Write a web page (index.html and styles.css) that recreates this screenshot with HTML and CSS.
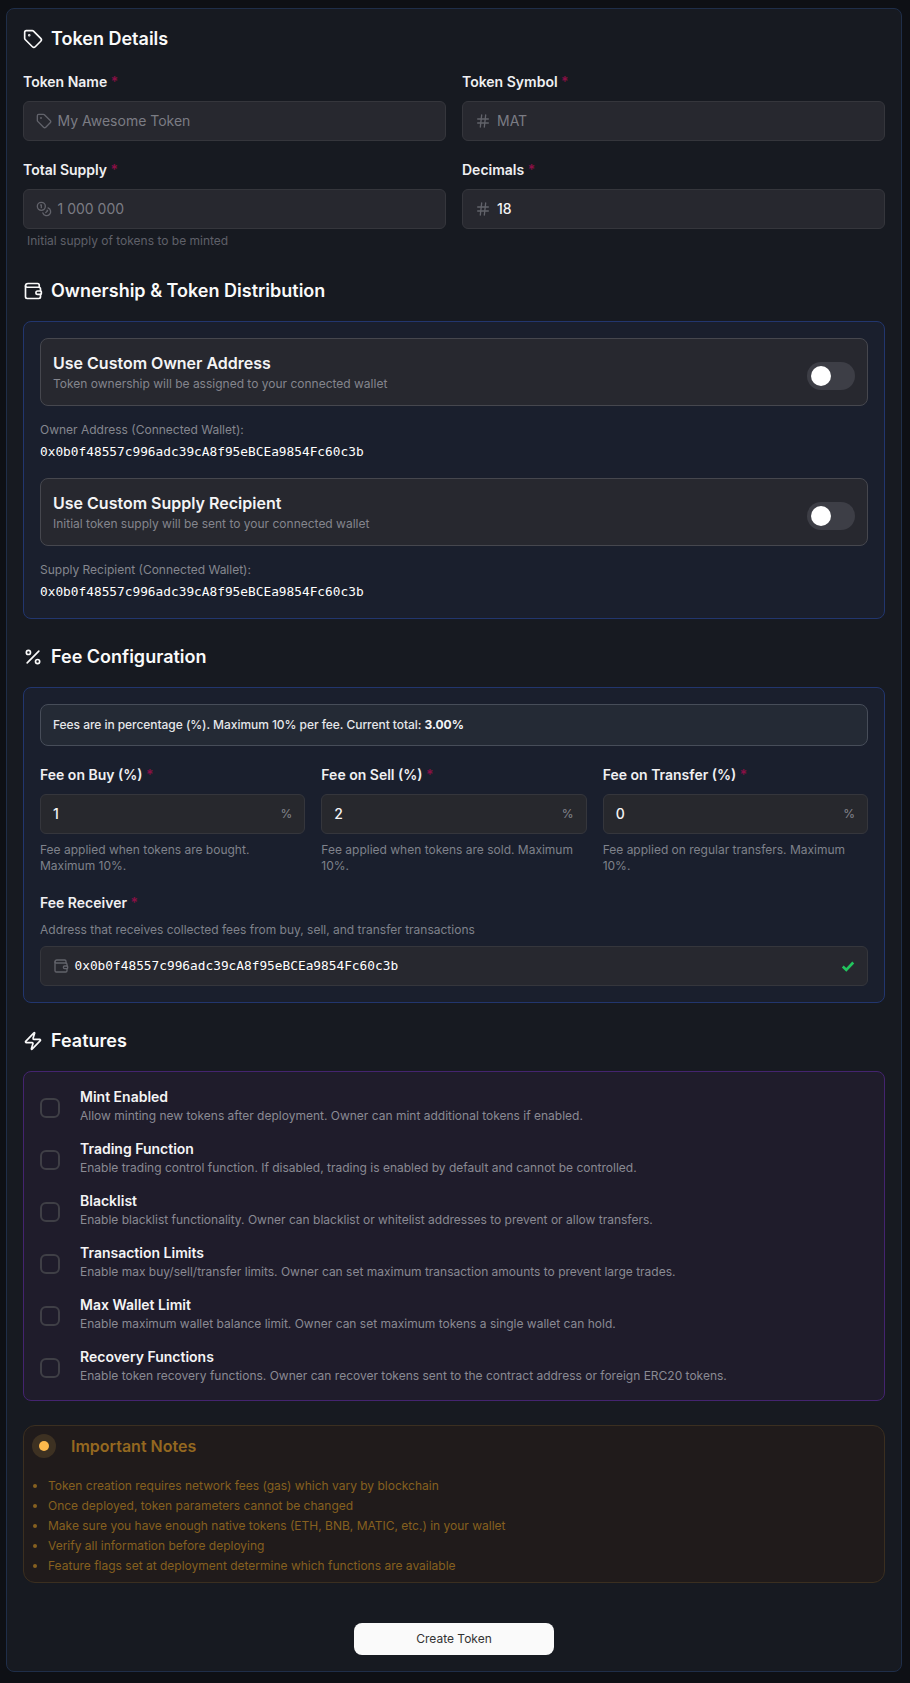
FILE: index.html
```html
<!DOCTYPE html>
<html lang="en">
<head>
  <meta charset="UTF-8" />
  <meta name="viewport" content="width=device-width, initial-scale=1" />
  <title>Create Token</title>
  <link rel="stylesheet" href="styles.css">
</head>
<body>

  <svg class="sprite" aria-hidden="true">
    <symbol id="i-tag" viewBox="0 0 24 24">
      <path d="M12.586 2.586A2 2 0 0 0 11.172 2H4a2 2 0 0 0-2 2v7.172a2 2 0 0 0 .586 1.414l8.704 8.704a2.426 2.426 0 0 0 3.42 0l6.58-6.58a2.426 2.426 0 0 0 0-3.42z"/>
      <circle cx="7.5" cy="7.5" r=".5" fill="currentColor"/>
    </symbol>
    <symbol id="i-wallet" viewBox="0 0 24 24">
      <path d="M19.5 7.5V5a2 2 0 0 0-2-2H6a3 3 0 0 0-3 3v13a2 2 0 0 0 2 2h14a2 2 0 0 0 2-2v-3"/>
      <path d="M3 6a2 2 0 0 0 2 1.5h14a2 2 0 0 1 2 2V12"/>
      <path d="M21 12h-3.5a2 2 0 0 0 0 4H21a1 1 0 0 0 1-1v-2a1 1 0 0 0-1-1"/>
    </symbol>
    <symbol id="i-percent" viewBox="0 0 24 24">
      <line x1="19" x2="5" y1="5" y2="19"/>
      <circle cx="6.5" cy="6.5" r="2.5"/>
      <circle cx="17.5" cy="17.5" r="2.5"/>
    </symbol>
    <symbol id="i-zap" viewBox="0 0 24 24">
      <path d="M4 14a1 1 0 0 1-.78-1.63l9.9-10.2a.5.5 0 0 1 .86.46l-1.92 6.02A1 1 0 0 0 13 10h7a1 1 0 0 1 .78 1.63l-9.9 10.2a.5.5 0 0 1-.86-.46l1.92-6.02A1 1 0 0 0 11 14z"/>
    </symbol>
    <symbol id="i-coins" viewBox="0 0 24 24">
      <circle cx="8" cy="8" r="6"/>
      <path d="M18.09 10.37A6 6 0 1 1 10.34 18"/>
      <path d="M7 6h1v4"/>
      <path d="m16.71 13.88.7.71-2.82 2.82"/>
    </symbol>
    <symbol id="i-hash" viewBox="0 0 24 24">
      <line x1="4" x2="20" y1="9" y2="9"/>
      <line x1="4" x2="20" y1="15" y2="15"/>
      <line x1="10" x2="8" y1="3" y2="21"/>
      <line x1="16" x2="14" y1="3" y2="21"/>
    </symbol>
  </svg>

  <form class="token-form">

    <h2 class="section-title first"><svg class="icon-lg"><use href="#i-tag"/></svg>Token Details</h2>

    <div class="details-grid">
      <div class="field">
        <div class="field-label">Token Name <span class="req">*</span></div>
        <div class="input"><svg class="icon-sm"><use href="#i-tag"/></svg><span class="placeholder">My Awesome Token</span></div>
      </div>
      <div class="field">
        <div class="field-label">Token Symbol <span class="req">*</span></div>
        <div class="input input-hash"><svg class="icon-sm"><use href="#i-hash"/></svg><span class="placeholder">MAT</span></div>
      </div>
      <div class="field">
        <div class="field-label">Total Supply <span class="req">*</span></div>
        <div class="input"><svg class="icon-sm"><use href="#i-coins"/></svg><span class="placeholder">1 000 000</span></div>
        <div class="supply-help">Initial supply of tokens to be minted</div>
      </div>
      <div class="field">
        <div class="field-label">Decimals <span class="req">*</span></div>
        <div class="input input-hash"><svg class="icon-sm"><use href="#i-hash"/></svg><span class="value">18</span></div>
      </div>
    </div>

    <h2 class="section-title"><svg class="icon-lg"><use href="#i-wallet"/></svg>Ownership &amp; Token Distribution</h2>

    <div class="panel panel-blue">
      <div class="switch-box">
        <div>
          <div class="switch-title">Use Custom Owner Address</div>
          <div class="switch-desc">Token ownership will be assigned to your connected wallet</div>
        </div>
        <div class="toggle"><span class="knob"></span></div>
      </div>
      <div class="address-block">
        <div class="address-label">Owner Address (Connected Wallet):</div>
        <div class="address">0x0b0f48557c996adc39cA8f95eBCEa9854Fc60c3b</div>
      </div>
      <div class="switch-box">
        <div>
          <div class="switch-title">Use Custom Supply Recipient</div>
          <div class="switch-desc">Initial token supply will be sent to your connected wallet</div>
        </div>
        <div class="toggle"><span class="knob"></span></div>
      </div>
      <div class="address-block last">
        <div class="address-label">Supply Recipient (Connected Wallet):</div>
        <div class="address">0x0b0f48557c996adc39cA8f95eBCEa9854Fc60c3b</div>
      </div>
    </div>

    <h2 class="section-title"><svg class="icon-lg"><use href="#i-percent"/></svg>Fee Configuration</h2>

    <div class="panel panel-blue">
      <div class="info-box">Fees are in percentage (%). Maximum 10% per fee. Current total: <strong>3.00%</strong></div>

      <div class="fee-grid">
        <div class="field">
          <div class="field-label">Fee on Buy (%) <span class="req">*</span></div>
          <div class="input input-fee"><span class="value">1</span><span class="suffix">%</span></div>
          <div class="help">Fee applied when tokens are bought. Maximum 10%.</div>
        </div>
        <div class="field">
          <div class="field-label">Fee on Sell (%) <span class="req">*</span></div>
          <div class="input input-fee"><span class="value">2</span><span class="suffix">%</span></div>
          <div class="help">Fee applied when tokens are sold. Maximum 10%.</div>
        </div>
        <div class="field">
          <div class="field-label">Fee on Transfer (%) <span class="req">*</span></div>
          <div class="input input-fee"><span class="value">0</span><span class="suffix">%</span></div>
          <div class="help">Fee applied on regular transfers. Maximum 10%.</div>
        </div>
      </div>

      <div class="field fee-receiver">
        <div class="field-label">Fee Receiver <span class="req">*</span></div>
        <div class="help receiver-help">Address that receives collected fees from buy, sell, and transfer transactions</div>
        <div class="input">
          <svg class="icon-sm"><use href="#i-wallet"/></svg>
          <span class="address receiver-address">0x0b0f48557c996adc39cA8f95eBCEa9854Fc60c3b</span>
          <svg class="check" viewBox="0 0 24 24"><path d="M3 13l6 5.5L21 6"/></svg>
        </div>
      </div>
    </div>

    <h2 class="section-title"><svg class="icon-lg"><use href="#i-zap"/></svg>Features</h2>

    <div class="panel panel-purple">
      <div class="feature">
        <span class="checkbox"></span>
        <div>
          <div class="feature-title">Mint Enabled</div>
          <div class="feature-desc">Allow minting new tokens after deployment. Owner can mint additional tokens if enabled.</div>
        </div>
      </div>
      <div class="feature">
        <span class="checkbox"></span>
        <div>
          <div class="feature-title">Trading Function</div>
          <div class="feature-desc">Enable trading control function. If disabled, trading is enabled by default and cannot be controlled.</div>
        </div>
      </div>
      <div class="feature">
        <span class="checkbox"></span>
        <div>
          <div class="feature-title">Blacklist</div>
          <div class="feature-desc">Enable blacklist functionality. Owner can blacklist or whitelist addresses to prevent or allow transfers.</div>
        </div>
      </div>
      <div class="feature">
        <span class="checkbox"></span>
        <div>
          <div class="feature-title">Transaction Limits</div>
          <div class="feature-desc">Enable max buy/sell/transfer limits. Owner can set maximum transaction amounts to prevent large trades.</div>
        </div>
      </div>
      <div class="feature">
        <span class="checkbox"></span>
        <div>
          <div class="feature-title">Max Wallet Limit</div>
          <div class="feature-desc">Enable maximum wallet balance limit. Owner can set maximum tokens a single wallet can hold.</div>
        </div>
      </div>
      <div class="feature">
        <span class="checkbox"></span>
        <div>
          <div class="feature-title">Recovery Functions</div>
          <div class="feature-desc">Enable token recovery functions. Owner can recover tokens sent to the contract address or foreign ERC20 tokens.</div>
        </div>
      </div>
    </div>

    <div class="notes">
      <div class="notes-head">
        <span class="notes-dot"></span>
        <span class="notes-title">Important Notes</span>
      </div>
      <ul class="notes-list">
        <li>Token creation requires network fees (gas) which vary by blockchain</li>
        <li>Once deployed, token parameters cannot be changed</li>
        <li>Make sure you have enough native tokens (ETH, BNB, MATIC, etc.) in your wallet</li>
        <li>Verify all information before deploying</li>
        <li>Feature flags set at deployment determine which functions are available</li>
      </ul>
    </div>

    <div class="actions">
      <button class="create-btn" type="button">Create Token</button>
    </div>

  </form>

</body>
</html>
```

FILE: styles.css
```css
html, body {
  margin: 0;
  padding: 0;
}

body {
  padding: 8px 8px 11px 6px;
  background: #0e1015;
  font-family: 'Inter', 'Liberation Sans', sans-serif;
  color: #fff;
}

svg {
  fill: none;
  stroke: currentColor;
  stroke-width: 2;
  stroke-linecap: round;
  stroke-linejoin: round;
  flex: none;
}

.sprite {
  display: none;
}

/* Outer card */
.token-form {
  background: #171a21;
  border: 1px solid #1f2e49;
  border-radius: 8px;
  padding: 16px;
}

.section-title {
  display: flex;
  align-items: center;
  gap: 8px;
  height: 28px;
  margin: 24px 0 16px 0;
  font-size: 18px;
  line-height: 28px;
  font-weight: 600;
  color: #fafafa;
}

.section-title.first {
  margin: 0 0 20px 0;
}

.icon-lg {
  width: 20px;
  height: 20px;
}

.icon-sm {
  width: 16px;
  height: 16px;
  color: #62636b;
}

/* Form fields */
.details-grid {
  display: grid;
  grid-template-columns: 1fr 1fr;
  gap: 20px 16px;
  padding-bottom: 4px;
}

.field-label {
  font-size: 14px;
  line-height: 18px;
  font-weight: 600;
  color: #f0f0f2;
  margin-bottom: 10px;
}

.req {
  color: #8a0f45;
}

.input {
  display: flex;
  align-items: center;
  gap: 5.5px;
  height: 40px;
  box-sizing: border-box;
  padding: 0 12px 1px 12px;
  background: #27282f;
  border: 1px solid #35363c;
  border-radius: 6px;
  font-size: 14px;
}

.input-hash {
  gap: 6px;
}

.placeholder {
  color: #7b7c84;
}

.value {
  color: #f4f4f5;
  font-weight: 500;
}

.suffix {
  margin-left: auto;
  font-size: 12px;
  color: #85868d;
}

.supply-help {
  margin: 4px 0 0 4px;
  font-size: 12px;
  line-height: 16px;
  color: #5f6069;
}

.help {
  margin-top: 8px;
  font-size: 12px;
  line-height: 16px;
  color: #7f828b;
}

/* Tinted panels */
.panel {
  border-radius: 8px;
  padding: 16px;
}

.panel-blue {
  background: #1a1f2d;
  border: 1px solid #22366e;
}

.panel-purple {
  background: #1f1c2b;
  border: 1px solid #44246f;
}

.switch-box {
  display: flex;
  align-items: center;
  justify-content: space-between;
  height: 68px;
  box-sizing: border-box;
  padding: 0 12px;
  background: #27282f;
  border: 1px solid #46474e;
  border-radius: 8px;
}

.switch-title {
  font-size: 16px;
  line-height: 22px;
  font-weight: 600;
  color: #f4f4f5;
}

.switch-desc {
  margin-top: 2px;
  font-size: 12px;
  line-height: 16px;
  color: #84858d;
}

.toggle {
  width: 48px;
  height: 28px;
  box-sizing: border-box;
  margin-top: 8px;
  padding: 4px;
  background: #3d3e46;
  border-radius: 14px;
}

.knob {
  display: block;
  width: 20px;
  height: 20px;
  background: #fff;
  border-radius: 50%;
}

.address-block {
  margin: 16px 0;
}

.address-block.last {
  margin-bottom: 0;
}

.address-label {
  font-size: 12px;
  line-height: 16px;
  color: #85878f;
  margin-bottom: 4px;
}

.address {
  font-family: 'DejaVu Sans Mono', 'Liberation Mono', monospace;
  font-size: 12.8px;
  line-height: 20px;
  color: #fff;
}

.info-box {
  height: 42px;
  box-sizing: border-box;
  padding: 0 12px;
  line-height: 39px;
  background: #242a35;
  border: 1px solid #474d59;
  border-radius: 8px;
  font-size: 12px;
  font-weight: 500;
  letter-spacing: -0.05px;
  color: #e6e7ea;
}

.info-box strong {
  font-weight: 700;
  color: #f4f4f5;
}

.fee-grid {
  display: grid;
  grid-template-columns: repeat(3, 1fr);
  gap: 16px;
  margin-top: 20px;
}

.input-fee {
  background: #27282d;
}

.fee-receiver {
  margin-top: 20px;
}

.receiver-help {
  margin-bottom: 8px;
}

.receiver-address {
  flex: 1;
}

.check {
  width: 14px;
  height: 14px;
  color: #22c55e;
  stroke-width: 4.5;
  stroke-linecap: butt;
  stroke-linejoin: miter;
}

/* Feature checklist */
.feature {
  display: flex;
  gap: 20px;
  margin-bottom: 16px;
}

.feature:last-child {
  margin-bottom: 0;
}

.checkbox {
  width: 20px;
  height: 20px;
  box-sizing: border-box;
  margin-top: 10px;
  border: 2px solid #3f3f46;
  border-radius: 6px;
  flex: none;
}

.feature-title {
  font-size: 14px;
  line-height: 18px;
  font-weight: 600;
  color: #f4f4f5;
}

.feature-desc {
  margin-top: 2px;
  font-size: 12px;
  line-height: 16px;
  color: #8a8a93;
}

/* Notes */
.notes {
  margin-top: 24px;
  padding: 8px 8px 6px 8px;
  background: #201b1b;
  border: 1px solid #3b2f20;
  border-radius: 12px;
}

.notes-head {
  display: flex;
  align-items: center;
  gap: 15px;
}

.notes-dot {
  display: flex;
  align-items: center;
  justify-content: center;
  width: 24px;
  height: 24px;
  background: #3d3122;
  border-radius: 50%;
}

.notes-dot::after {
  content: "";
  width: 10px;
  height: 10px;
  background: #fdb94c;
  border-radius: 50%;
}

.notes-title {
  font-size: 16px;
  font-weight: 600;
  color: #946820;
}

.notes-list {
  margin: 18px 0 0 0;
  padding: 0 0 0 16px;
  font-size: 12px;
  line-height: 20px;
  color: #86601f;
}

.actions {
  display: flex;
  justify-content: center;
  margin-top: 40px;
}

.create-btn {
  width: 200px;
  height: 32px;
  padding: 0 0 1px 0;
  background: #fafafa;
  border: none;
  border-radius: 8px;
  font-family: inherit;
  font-size: 12px;
  color: #333;
}
```
